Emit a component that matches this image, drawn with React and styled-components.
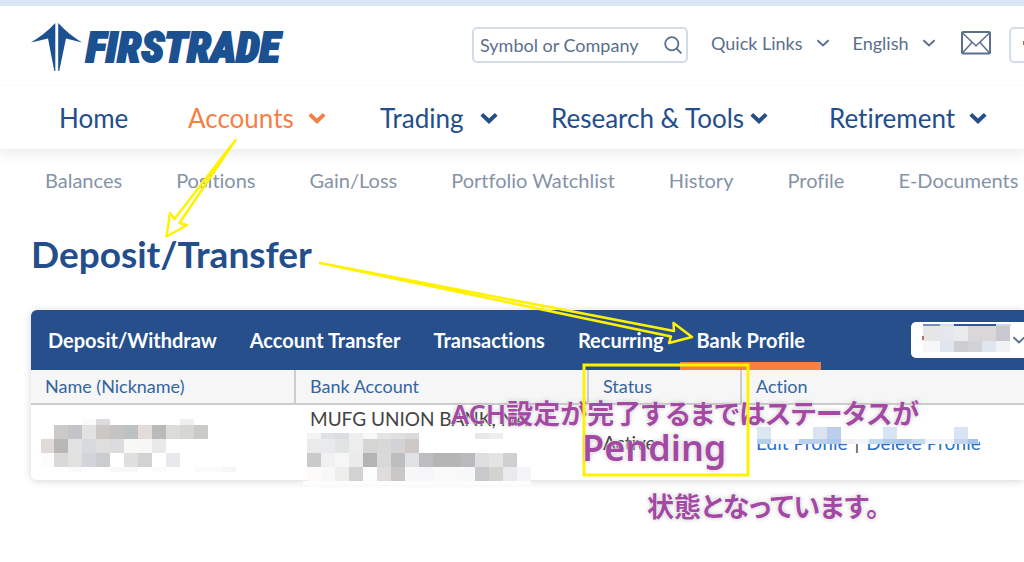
import React from 'react';
import styled, { createGlobalStyle } from 'styled-components';

const navItems = [
  { label: 'Home' },
  { label: 'Accounts', active: true, gap: 14 },
  { label: 'Trading', gap: 16 },
  { label: 'Research & Tools', gap: 6 },
  { label: 'Retirement', gap: 14 },
];

const subItems = ['Balances', 'Positions', 'Gain/Loss', 'Portfolio Watchlist', 'History', 'Profile', 'E-Documents'];

const tabs = ['Deposit/Withdraw', 'Account Transfer', 'Transactions', 'Recurring', 'Bank Profile'];

// Each strip is a row of a mosaic: y, height, then [x, width, colour] blocks.
const strips = [
  // name
  [419, 6, [[82, 14, '#fafafa'], [96, 14, '#dadce0'], [180, 14, '#f0f0f0']]],
  [425, 14, [[54, 14, '#cbcac8'], [68, 14, '#c4c3c7'], [82, 14, '#e2e2e3'], [96, 14, '#cec8c4'], [110, 14, '#c3c3c3'], [124, 14, '#bcc1c1'], [138, 14, '#e3dcd8'], [152, 14, '#bcbab8'], [166, 14, '#dcdcdb'], [180, 14, '#d6d6d5'], [194, 14, '#cacac9']]],
  [439, 14, [[41, 13, '#dfdad7'], [54, 14, '#b9b7b4'], [68, 14, '#e2e2e2'], [82, 14, '#d7dae1'], [96, 14, '#dedede'], [110, 14, '#dadcdf'], [124, 14, '#f9f8f6'], [138, 14, '#f7f8f6'], [152, 14, '#e9e9e9']]],
  [453, 14, [[41, 13, '#fcfcfc'], [54, 14, '#d9d9d7'], [68, 14, '#e1e1e0'], [82, 14, '#d2d4db'], [96, 14, '#cbccce'], [124, 14, '#dfdfdd'], [138, 14, '#d3d1d2'], [166, 14, '#e7e9ec']]],
  [467, 5, [[68, 14, '#f9f9f9'], [110, 28, '#f8f8f8'], [152, 14, '#fafafa'], [194, 28, '#fafafa'], [222, 14, '#f6f6f6']]],
  // bank account
  [433, 6, [[307, 14, '#f3f3f1'], [321, 14, '#dfe0e3'], [335, 14, '#dcdde0'], [349, 14, '#eeeeee'], [363, 14, '#f8f8f8'], [377, 14, '#e4e4e2'], [391, 14, '#e0e0df'], [405, 14, '#d9dade'], [475, 14, '#e8e8e8'], [489, 14, '#eeeeee']]],
  [439, 14, [[307, 14, '#eaeaea'], [321, 14, '#e9eaed'], [335, 14, '#e0e4e2'], [349, 14, '#ededee'], [363, 14, '#d6d5d3'], [377, 14, '#d8d8d7'], [391, 14, '#d1d3d6'], [405, 14, '#cec8c6']]],
  [453, 14, [[307, 14, '#cacaca'], [321, 14, '#f1f1f1'], [335, 14, '#f5f6f5'], [349, 14, '#ebebec'], [363, 14, '#b4b4b4'], [377, 14, '#d9d9d9'], [391, 14, '#bebebe'], [405, 14, '#dfe1e4'], [419, 14, '#bdbdbf'], [433, 28, '#b5b5b5'], [461, 14, '#bababc'], [475, 14, '#dddee0'], [489, 14, '#e4e4e4'], [503, 14, '#d0d0d0']]],
  [467, 14, [[307, 14, '#fdfbf9'], [321, 14, '#f8f8f8'], [335, 14, '#ededeb'], [349, 14, '#d2d2d0'], [363, 14, '#fbfdfc'], [377, 14, '#dedddc'], [391, 14, '#cac8c6'], [405, 14, '#f7f7f7'], [419, 14, '#f6f6f8'], [433, 28, '#f9f9f9'], [461, 14, '#f7f8f8'], [475, 14, '#c8c9cc'], [489, 14, '#d3d3d0'], [503, 14, '#e8eaed'], [517, 14, '#f5f5f8']]],
  [481, 4, [[303, 228, '#fdfdfd']]],
  // actions
  [427, 12, [[757, 222, '#ffffff'], [757, 14, '#dce7f4'], [813, 14, '#dbe3f0'], [827, 14, '#bccfea'], [883, 14, '#d8e4f4'], [954, 14, '#d8e4f4']]],
  [439, 5, [[757, 222, '#f1f5fb'], [757, 14, '#b5cfea'], [799, 28, '#bcd0ec'], [827, 14, '#b0c9ea'], [841, 14, '#f1eff1'], [869, 14, '#c0daf0'], [883, 14, '#b4cde9'], [897, 14, '#adc8e8'], [911, 14, '#c5d8ee'], [954, 14, '#c3d4ee'], [968, 10, '#a8c3e8']]],
  // account picker
  [324, 2, [[923, 17, '#7590b5'], [940, 14, '#d6deea'], [954, 42, '#2f5892'], [996, 15, '#ccd8e8']]],
  [326, 15, [[923, 17, '#e6e6e7'], [940, 14, '#e4e8ee'], [954, 14, '#eaebed'], [968, 28, '#d9d7d7'], [996, 14, '#c9c8cf']]],
  [341, 11, [[923, 17, '#f5f7f9'], [940, 14, '#e0e6ef'], [954, 14, '#cdced1'], [968, 14, '#d3d3d5'], [982, 14, '#e0e6ef'], [996, 14, '#f1f2f5']]],
  // edges of the covered avatars
  [336, 4, [[922, 2, '#a9796a']]],
  [41, 4, [[1023, 1, '#a9683c']]],
];

const Chevron = ({ size = 18, weight = 4 }) => (
  <svg width={size} height={size} viewBox="0 0 18 18" fill="none" stroke="currentColor" strokeWidth={weight} aria-hidden="true">
    <path d="M1.8 5.4 9 12.2l7.2-6.8" />
  </svg>
);

const App = () => (
  <Page>
    <GlobalStyle />
    <Header>
      <BrandRow>
        <Brand href="#" aria-label="Firstrade">
          <svg width="51" height="50" viewBox="0 0 51 50" fill="currentColor" aria-hidden="true">
            <path d="M24.300 1v48h-1L17 16.500 0 20.500C8 15.500 17 9 24.300 1Z" />
            <path d="M27.200 1v48h1L35 16.500 51 20.500C43 15.500 34.500 9 27.200 1Z" />
          </svg>
          <Wordmark>FIRSTRADE</Wordmark>
        </Brand>
        <Search>
          <input type="text" placeholder="Symbol or Company" aria-label="Symbol or Company" />
          <button type="button" aria-label="Search">
            <svg width="18" height="18" viewBox="0 0 18 18" fill="none" stroke="currentColor" strokeWidth="1.8" aria-hidden="true">
              <circle cx="7.8" cy="7.8" r="6.6" />
              <path d="m12.4 12.4 5 5" />
            </svg>
          </button>
        </Search>
        <Tools>
          <ToolButton type="button">
            Quick Links <Chevron size={14} weight={2.4} />
          </ToolButton>
          <ToolButton type="button">
            English <Chevron size={14} weight={2.4} />
          </ToolButton>
          <Mail href="#" aria-label="Messages">
            <svg width="30" height="24" viewBox="0 0 30 24" fill="none" stroke="currentColor" aria-hidden="true">
              <rect x="1" y="1" width="28" height="21.5" rx="1" strokeWidth="2" />
              <path strokeWidth="1.5" d="m1.500 2 13.500 12.700L28.500 2M1.500 22l9.600-10.700M28.500 22l-9.600-10.700" />
            </svg>
          </Mail>
        </Tools>
        <UserButton type="button" aria-label="Account menu" />
      </BrandRow>
      <MainNav aria-label="Main">
        {navItems.map(item => (
          <NavLink href="#" key={item.label} $active={item.active} $gap={item.gap}>
            {item.label}
            {item.gap && <Chevron />}
          </NavLink>
        ))}
      </MainNav>
    </Header>

    <SubNav aria-label="Accounts">
      {subItems.map(label => (
        <a href="#" key={label}>
          {label}
        </a>
      ))}
    </SubNav>

    <Main>
      <Title>Deposit/Transfer</Title>
      <Card>
        <TabBar>
          {tabs.map(label => (
            <Tab href="#" key={label} $active={label === 'Bank Profile'}>
              {label}
            </Tab>
          ))}
          <Picker>
            <select aria-label="Account">
              <option value="" />
            </select>
            <Chevron size={14} weight={2.4} />
          </Picker>
        </TabBar>
        <Table>
          <thead>
            <tr>
              <th>Name (Nickname)</th>
              <th>Bank Account</th>
              <th>Status</th>
              <th>Action</th>
            </tr>
          </thead>
          <tbody>
            <tr>
              <td />
              <td className="bank">MUFG UNION BANK, NA</td>
              <td>Active</td>
              <td>
                <a href="#">Edit Profile</a>
                <span>|</span>
                <a href="#">Delete Profile</a>
              </td>
            </tr>
          </tbody>
        </Table>
      </Card>
    </Main>

    <Overlay width="1024" height="562" aria-hidden="true">
      {strips.map(([y, height, blocks]) =>
        blocks.map(([x, width, fill]) => (
          <rect key={`${x}-${y}-${width}`} x={x} y={y} width={width} height={height} fill={fill} shapeRendering="crispEdges" />
        ))
      )}
    </Overlay>
    <Note $left={451} $top={394}>ACH設定が完了するまではステータスが</Note>
    <Overlay width="1024" height="562" fill="none" stroke="#fff200" strokeWidth="3" aria-hidden="true">
      <rect x="584" y="365" width="164" height="110" />
      <g strokeWidth="2.5" strokeLinejoin="round">
        <path d="M235.500 140 174.500 219 170 213 166.500 236.500 187 225 179.500 223Z" />
        <path d="M320 263 674 331 673.500 323 692 337 669 343 671 336.500Z" />
      </g>
    </Overlay>
    <Note $left={582} $top={428} $large>Pending</Note>
    <Note $left={647} $top={487}>状態となっています。</Note>
  </Page>
);

const GlobalStyle = createGlobalStyle`
  * {
    box-sizing: border-box;
  }
  body {
    margin: 0;
    background: #fff;
    overflow: hidden;
  }
  a {
    color: inherit;
    text-decoration: none;
  }
  button, input, select {
    font: inherit;
    color: inherit;
    background: none;
    border: 0;
    margin: 0;
    padding: 0;
  }
`;

const Page = styled.div`
  position: relative;
  min-height: 100vh;
  overflow: hidden;
  border-top: 6px solid #dae6f4;
  font-family: Lato, 'Liberation Sans', sans-serif;
  font-size: 20px;
  font-variant-ligatures: none;
  color: #244e8b;
  white-space: nowrap;
`;

const Header = styled.header`
  box-shadow: 0 0 16px rgba(40, 50, 70, 0.16);
`;

const BrandRow = styled.div`
  display: flex;
  align-items: center;
  height: 80px;
  padding: 0 0 2px 31px;
  border-bottom: 1px solid #fafafa;
`;

const Brand = styled.a`
  display: flex;
  align-items: center;
  gap: 4px;
  width: 441px;
  flex: none;
  padding-top: 4px;
  color: #1b5091;
`;

const Wordmark = styled.span`
  font-family: 'Roboto Condensed', 'Liberation Sans Narrow', 'Liberation Sans', sans-serif;
  font-size: 43px;
  font-weight: 900;
  font-style: italic;
  line-height: 48px;
  -webkit-text-stroke: 2px currentColor;
`;

const Search = styled.form`
  display: flex;
  align-items: center;
  flex: none;
  width: 216px;
  height: 36px;
  margin-right: 23px;
  border: 2px solid #d3ddea;
  border-radius: 5px;
  color: #5b6f8d;
  input {
    flex: 1;
    min-width: 0;
    padding-left: 6px;
    font-size: 18px;
  }
  input::placeholder {
    color: #5b6f8d;
    opacity: 1;
  }
  button {
    display: flex;
    padding: 0 4px;
  }
`;

const Tools = styled.div`
  display: flex;
  align-items: center;
  flex: none;
  padding-bottom: 3px;
  color: #5b6f8d;
`;

const ToolButton = styled.button`
  display: flex;
  align-items: center;
  gap: 13px;
  margin-right: 23px;
  font-size: 18px;
`;

const Mail = styled.a`
  display: flex;
  margin: 0 18px 0 2px;
`;

const UserButton = styled.button`
  flex: none;
  width: 60px;
  height: 36px;
  border: 2px solid #d3ddea;
  border-radius: 5px;
`;

const MainNav = styled.nav`
  display: grid;
  grid-template-columns: 129fr 192fr 171fr 278fr 195fr;
  align-items: center;
  height: 63px;
  padding-left: 59px;
  font-size: 26px;
`;

const NavLink = styled.a`
  display: flex;
  align-items: center;
  gap: ${({ $gap }) => $gap || 0}px;
  color: ${({ $active }) => ($active ? '#f58045' : '#244e8b')};
`;

const SubNav = styled.nav`
  display: flex;
  gap: 54px;
  padding: 19px 0 0 45px;
  line-height: 24px;
  color: #8593a8;
`;

const Main = styled.main`
  padding: 38px 0 0 31px;
`;

const Title = styled.h1`
  margin: 0 0 32px;
  font-size: 37px;
  font-weight: 700;
  line-height: 48px;
`;

const Card = styled.section`
  border-radius: 6px 0 0 6px;
  box-shadow: 0 1px 8px rgba(0, 0, 0, 0.16);
  overflow: hidden;
`;

const TabBar = styled.nav`
  display: flex;
  height: 60px;
  background: #264f8c;
`;

const Tab = styled.a`
  padding: 0 16px 0 17px;
  line-height: 60px;
  font-weight: 700;
  color: #fff;
  box-shadow: ${({ $active }) => ($active ? 'inset 0 -8px #f58045' : 'none')};
`;

const Picker = styled.div`
  display: flex;
  align-items: center;
  flex: none;
  width: 137px;
  height: 36px;
  margin: 12px -24px 0 auto;
  border-radius: 5px;
  background: #fff;
  color: #5b6f8d;
  select {
    width: 101px;
    height: 36px;
    appearance: none;
  }
`;

const Table = styled.table`
  width: 100%;
  table-layout: fixed;
  border-collapse: separate;
  border-spacing: 0;
  font-size: 19px;
  line-height: 24px;
  th {
    padding: 4px 14px 5px;
    background: #f6f6f6;
    border-right: 2px solid #ccc;
    border-bottom: 2px solid #ccc;
    font-size: 18px;
    font-weight: 400;
    text-align: left;
    color: #34659f;
  }
  th:nth-child(1) {
    width: 265px;
  }
  th:nth-child(2) {
    width: 293px;
  }
  th:nth-child(3) {
    width: 153px;
  }
  th:last-child {
    border-right: 0;
  }
  td {
    height: 75px;
    padding: 0 14px;
    vertical-align: middle;
    color: #444;
  }
  td a {
    color: #2a6fc9;
  }
  td span {
    margin: 0 7px;
  }
  .bank {
    padding-top: 2px;
    vertical-align: top;
  }
`;

const Overlay = styled.svg`
  position: absolute;
  top: -6px;
  left: 0;
  pointer-events: none;
`;

const Note = styled.p`
  position: absolute;
  top: ${({ $top }) => $top - 6}px;
  left: ${({ $left }) => $left}px;
  margin: 0;
  font-family: 'Noto Sans', 'Noto Sans CJK JP', sans-serif;
  font-size: ${({ $large }) => ($large ? 36 : 27)}px;
  font-weight: 600;
  line-height: 40px;
  font-feature-settings: 'palt';
  color: #a349a4;
  text-shadow: 0 0 1px #fff, 0 0 2px #fff, 0 0 4px rgba(120, 120, 120, 0.5);
`;

export default App;
